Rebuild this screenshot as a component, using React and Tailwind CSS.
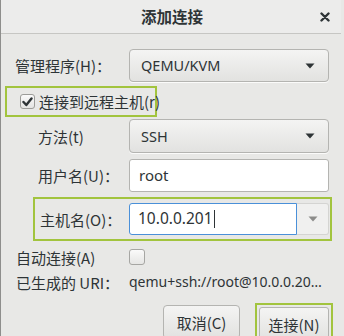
import React from "react";

const Arrow = ({ color = "#2e3436" }) => (
  <svg width="10" height="6" viewBox="0 0 10 6">
    <path d="M0.5 0.5 L9.5 0.5 L5 5.5 Z" fill={color} />
  </svg>
);

const Combo = ({ text }) => (
  <div className="w-[200px] h-full flex items-center justify-between pl-[11px] pr-[13px] rounded-[4px] border border-[#b4b4b1] bg-gradient-to-b from-[#f4f4f3] to-[#e2e2e0] shadow-[0_1px_0_rgba(255,255,255,0.8)] text-[#2e3436] text-[14.5px]">
    <span>{text}</span>
    <Arrow />
  </div>
);

export default function App() {
  return (
    <div className="w-[344px] h-[336px] overflow-hidden bg-[#e8e8e6] border-l border-[#8e8e8c] font-['Noto_Sans','Noto_Sans_CJK_SC',sans-serif] text-[#2e3436] text-[15px] leading-none">
      {/* title bar */}
      <div className="relative h-[34px] flex items-center justify-center border-b border-[#c6c6c3] bg-[#ececeb] mr-[3px]">
        <span className="font-['Noto_Sans_CJK_SC',sans-serif] font-bold text-[15.5px] text-[#2e3436] ml-[2px]">添加连接</span>
        <svg className="absolute left-[319px] top-[12px]" width="10" height="10" viewBox="0 0 10 10">
          <path d="M1.5 1.5 L8.5 8.5 M8.5 1.5 L1.5 8.5" stroke="#2e3436" strokeWidth="2.4" strokeLinecap="round" />
        </svg>
      </div>

      <div className="flex flex-col">
        {/* row 1 */}
        <div className="flex items-center h-[33px] mt-[15px] pl-[14px]">
          <div className="w-[114px] font-['Noto_Sans_CJK_SC',sans-serif] whitespace-nowrap">管理程序(H)：</div>
          <Combo text="QEMU/KVM" />
        </div>

        {/* row 2 checkbox */}
        <div className="mt-[4px] ml-[4px] w-[152px] h-[31px] border-2 border-[#a2c43e] flex items-center pl-[13px]">
          <div className="shrink-0 w-[15px] h-[15px] rounded-[3px] border border-[#9c9c99] bg-gradient-to-b from-[#fafafa] to-[#e4e4e2] flex items-center justify-center">
            <svg width="11" height="10" viewBox="0 0 11 10">
              <path d="M1.5 5 L4.3 8 L9.5 1.5" stroke="#2e3436" strokeWidth="2.4" fill="none" strokeLinecap="round" strokeLinejoin="round" />
            </svg>
          </div>
          <span className="ml-[4px] font-['Noto_Sans_CJK_SC',sans-serif] text-[15px] whitespace-nowrap">连接到远程主机(r)</span>
        </div>

        {/* row 3 */}
        <div className="flex items-center h-[34px] mt-[2px] pl-[37px]">
          <div className="w-[91px] font-['Noto_Sans_CJK_SC',sans-serif] whitespace-nowrap">方法(t)</div>
          <Combo text="SSH" />
        </div>

        {/* row 4 */}
        <div className="flex items-center h-[33px] mt-[6px] pl-[37px]">
          <div className="w-[91px] font-['Noto_Sans_CJK_SC',sans-serif] whitespace-nowrap">用户名(U)：</div>
          <div className="w-[200px] h-full flex items-center pl-[9px] rounded-[3px] border border-[#b4b4b1] bg-white text-[15px]">root</div>
        </div>

        {/* row 5 */}
        <div className="mt-[5px] ml-[32px] w-[299px] h-[44px] border-2 border-[#a2c43e] flex items-center pl-[5px]">
          <div className="w-[89px] font-['Noto_Sans_CJK_SC',sans-serif] whitespace-nowrap">主机名(O)：</div>
          <div className="w-[168px] h-[32px] flex items-center pl-[8px] rounded-l-[3px] border border-[#4a90d9] bg-white text-[15.5px]">
            10.0.0.201<span className="inline-block w-[1px] h-[18px] bg-[#2e3436] ml-[1px]" />
          </div>
          <div className="w-[32px] h-[32px] flex items-center justify-center bg-[#f0f0ef] border-y border-r border-[#d4d4d2] rounded-r-[3px]">
            <Arrow color="#8c8c8a" />
          </div>
        </div>

        {/* row 6 */}
        <div className="flex items-center h-[16px] mt-[8px] pl-[15px]">
          <div className="w-[113px] font-['Noto_Sans_CJK_SC',sans-serif] whitespace-nowrap">自动连接(A)</div>
          <div className="w-[16px] h-[16px] rounded-[3px] border border-[#a6a6a3] bg-gradient-to-b from-[#fafafa] to-[#e6e6e4]" />
        </div>

        {/* row 7 */}
        <div className="flex items-center h-[16px] mt-[9px] pl-[15px]">
          <div className="w-[113px] font-['Noto_Sans_CJK_SC',sans-serif] whitespace-nowrap">已生成的 URI：</div>
          <div className="whitespace-nowrap text-[14px]">qemu+ssh://root@10.0.0.20…</div>
        </div>

        {/* row 8 buttons */}
        <div className="flex items-start mt-[13px] pl-[162px]">
          <div className="mt-[2px] w-[77px] h-[34px] flex items-center justify-center rounded-[4px] border border-[#b4b4b1] bg-gradient-to-b from-[#f4f4f3] to-[#e2e2e0] font-['Noto_Sans_CJK_SC',sans-serif]">
            取消(C)
          </div>
          <div className="ml-[15px] w-[78px] h-[36px] border-2 border-[#a2c43e] p-[2px]">
            <div className="w-full h-[34px] flex items-center justify-center rounded-[3px] border border-[#b4b4b1] bg-gradient-to-b from-[#f4f4f3] to-[#e2e2e0] font-['Noto_Sans_CJK_SC',sans-serif]">
              连接(N)
            </div>
          </div>
        </div>
      </div>
    </div>
  );
}
